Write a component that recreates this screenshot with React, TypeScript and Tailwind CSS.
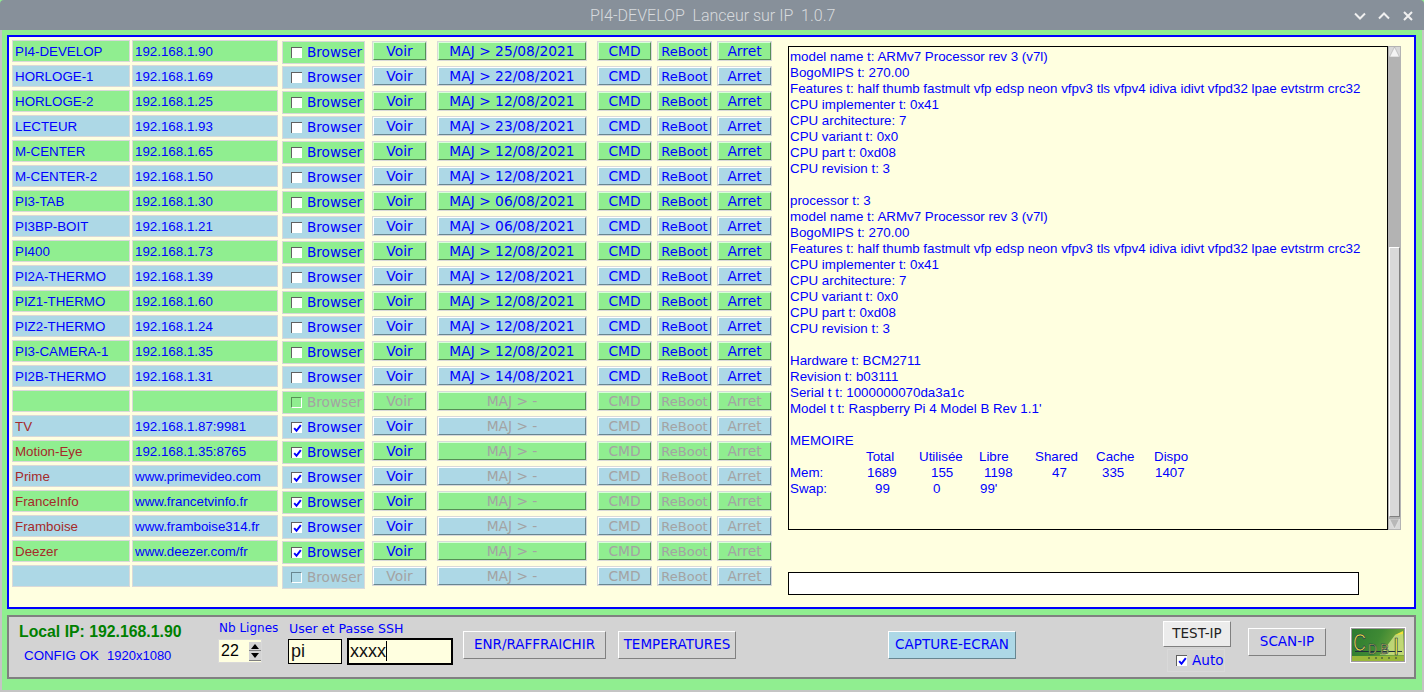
import React from "react";

type Row = { n: string; ip: string; maj: string; chk?: boolean; bOff?: boolean; vOff?: boolean; rest?: boolean; red?: boolean };

const rows: Row[] = [
  { n: "PI4-DEVELOP", ip: "192.168.1.90", maj: "25/08/2021" },
  { n: "HORLOGE-1", ip: "192.168.1.69", maj: "22/08/2021" },
  { n: "HORLOGE-2", ip: "192.168.1.25", maj: "12/08/2021" },
  { n: "LECTEUR", ip: "192.168.1.93", maj: "23/08/2021" },
  { n: "M-CENTER", ip: "192.168.1.65", maj: "12/08/2021" },
  { n: "M-CENTER-2", ip: "192.168.1.50", maj: "12/08/2021" },
  { n: "PI3-TAB", ip: "192.168.1.30", maj: "06/08/2021" },
  { n: "PI3BP-BOIT", ip: "192.168.1.21", maj: "06/08/2021" },
  { n: "PI400", ip: "192.168.1.73", maj: "12/08/2021" },
  { n: "PI2A-THERMO", ip: "192.168.1.39", maj: "12/08/2021" },
  { n: "PIZ1-THERMO", ip: "192.168.1.60", maj: "12/08/2021" },
  { n: "PIZ2-THERMO", ip: "192.168.1.24", maj: "12/08/2021" },
  { n: "PI3-CAMERA-1", ip: "192.168.1.35", maj: "12/08/2021" },
  { n: "PI2B-THERMO", ip: "192.168.1.31", maj: "14/08/2021" },
  { n: "", ip: "", maj: "-", bOff: true, vOff: true, rest: true },
  { n: "TV", ip: "192.168.1.87:9981", maj: "-", chk: true, rest: true, red: true },
  { n: "Motion-Eye", ip: "192.168.1.35:8765", maj: "-", chk: true, rest: true, red: true },
  { n: "Prime", ip: "www.primevideo.com", maj: "-", chk: true, rest: true, red: true },
  { n: "FranceInfo", ip: "www.francetvinfo.fr", maj: "-", chk: true, rest: true, red: true },
  { n: "Framboise", ip: "www.framboise314.fr", maj: "-", chk: true, rest: true, red: true },
  { n: "Deezer", ip: "www.deezer.com/fr", maj: "-", chk: true, rest: true, red: true },
  { n: "", ip: "", maj: "-", bOff: true, vOff: true, rest: true },
];

const infoTop = [
  "model name t: ARMv7 Processor rev 3 (v7l)",
  "BogoMIPS t: 270.00",
  "Features t: half thumb fastmult vfp edsp neon vfpv3 tls vfpv4 idiva idivt vfpd32 lpae evtstrm crc32",
  "CPU implementer t: 0x41",
  "CPU architecture: 7",
  "CPU variant t: 0x0",
  "CPU part t: 0xd08",
  "CPU revision t: 3",
  "\u00a0",
  "processor t: 3",
  "model name t: ARMv7 Processor rev 3 (v7l)",
  "BogoMIPS t: 270.00",
  "Features t: half thumb fastmult vfp edsp neon vfpv3 tls vfpv4 idiva idivt vfpd32 lpae evtstrm crc32",
  "CPU implementer t: 0x41",
  "CPU architecture: 7",
  "CPU variant t: 0x0",
  "CPU part t: 0xd08",
  "CPU revision t: 3",
  "\u00a0",
  "Hardware t: BCM2711",
  "Revision t: b03111",
  "Serial t t: 1000000070da3a1c",
  "Model t t: Raspberry Pi 4 Model B Rev 1.1'",
  "\u00a0",
  "MEMOIRE",
];

function Tick() {
  return (
    <svg viewBox="0 0 9 9" className="absolute left-[1px] top-[1px] w-[9px] h-[9px]">
      <path d="M1.2 4.2 L3.5 6.8 L7.8 1.2" fill="none" stroke="#0000ff" strokeWidth="2" />
    </svg>
  );
}

function Btn({ w, g, off, small, children }: { w: string; g: boolean; off?: boolean; small?: boolean; children: React.ReactNode }) {
  return (
    <div className={`${w} h-[20px] border border-[#d9d9d9] shrink-0`}>
      <div
        className={`h-full border pt-[1px] flex items-center justify-center ${small ? "text-[13px]" : "text-[13.8px]"} leading-none ${
          g ? "bg-[#90ee90] border-t-[#d8ffd8] border-l-[#d8ffd8] border-b-[#569056] border-r-[#569056]" : "bg-[#add8e6] border-t-[#ffffff] border-l-[#ffffff] border-b-[#688690] border-r-[#688690]"
        } ${off ? "text-[#a3a3a3]" : "text-[#0000ff]"}`}
      >
        <span className="whitespace-pre">{children}</span>
      </div>
    </div>
  );
}

function TableRow({ r, i }: { r: Row; i: number }) {
  const g = i % 2 === 0;
  const bg = g ? "bg-[#90ee90]" : "bg-[#add8e6]";
  return (
    <div className="flex h-[25px] items-start">
      <div className={`w-[118px] h-[22px] shrink-0 border border-[#d9d9d9] ${bg} pl-[2px] pt-[1px] flex items-center text-[13.33px] font-[Liberation_Sans,sans-serif] ${r.red ? "text-[#a52a2a]" : "text-[#0000ff]"}`}>
        {r.n}
      </div>
      <div className={`ml-[2px] w-[146px] h-[22px] shrink-0 border border-[#d9d9d9] ${bg} pl-[2px] pt-[1px] flex items-center text-[13.33px] font-[Liberation_Sans,sans-serif] text-[#0000ff]`}>
        {r.ip}
      </div>
      <div className={`ml-[4px] mt-[1px] w-[83px] h-[23px] shrink-0 border border-[#d9d9d9] ${bg} relative flex items-center`}>
        <div
          className={`absolute left-[8px] top-[5px] w-[11px] h-[11px] border-t border-l ${
            r.bOff ? (g ? "bg-[#90ee90] border-[#569056] border-r border-b border-r-[#ffffff] border-b-[#ffffff]" : "bg-[#add8e6] border-[#688690] border-r border-b border-r-[#ffffff] border-b-[#ffffff]") : "bg-white border-[#606060]"
          }`}
        >
          {r.chk && <Tick />}
        </div>
        <span className={`absolute left-[24px] top-[2px] text-[13.6px] leading-[17px] ${r.bOff ? "text-[#a3a3a3]" : "text-[#0000ff]"}`}>Browser</span>
      </div>
      <div className="ml-[7px] mt-[1px] flex">
        <Btn w="w-[55px]" g={g} off={r.vOff}>Voir</Btn>
        <div className="ml-[10px]"><Btn w="w-[150px]" g={g} off={r.rest}>{`MAJ > ${r.maj}`}</Btn></div>
        <div className="ml-[10px]"><Btn w="w-[55px]" g={g} off={r.rest}>CMD</Btn></div>
        <div className="ml-[5px]"><Btn w="w-[55px]" g={g} off={r.rest} small>ReBoot</Btn></div>
        <div className="ml-[5px]"><Btn w="w-[55px]" g={g} off={r.rest}>Arret</Btn></div>
      </div>
    </div>
  );
}

function PanelBtn({ cls, children }: { cls: string; children: React.ReactNode }) {
  return (
    <div className={`absolute border border-t-white border-l-white flex items-center justify-center pb-[1px] text-[13.5px] leading-none whitespace-pre ${cls}`}>
      {children}
    </div>
  );
}

export default function App() {
  return (
    <div className="relative w-[1424px] h-[692px] overflow-hidden bg-[#90ee90] font-[DejaVu_Sans,sans-serif]">
      {/* title bar */}
      <div className="absolute left-0 top-0 w-[1424px] h-[30px] bg-[#87909a] rounded-t-[4px] flex items-center justify-center">
        <span className="absolute left-[590px] top-[6px] whitespace-pre text-[16px] leading-[20px] font-light text-[#d8dbde] font-[Roboto,sans-serif]">
          PI4-DEVELOP  Lanceur sur IP  1.0.7
        </span>
        <svg viewBox="0 0 72 12" className="absolute left-[1351px] top-[10px] w-[72px] h-[12px]">
          <path d="M4 3.5 L9 8.5 L14 3.5" fill="none" stroke="#f0f0f0" strokeWidth="2" />
          <path d="M28 8.5 L33 3.5 L38 8.5" fill="none" stroke="#f0f0f0" strokeWidth="2" />
          <path d="M53 2 L61 10 M61 2 L53 10" fill="none" stroke="#f0f0f0" strokeWidth="2" />
        </svg>
      </div>
      <div className="absolute left-0 top-[30px] bottom-0 w-[2px] bg-[#c4c4c4]" />
      <div className="absolute left-0 bottom-0 w-full h-[2px] bg-[#c4c4c4]" />
      <div className="absolute right-0 top-[30px] bottom-0 w-[2px] bg-[#c4c4c4]" />

      {/* main frame */}
      <div className="absolute left-[7px] top-[35px] w-[1409px] h-[574px] border-2 border-[#0000ff] bg-[#ffffe0]">
        <div className="absolute left-[3px] top-[3px]">
          {rows.map((r, i) => (
            <TableRow key={i} r={r} i={i} />
          ))}
        </div>

        {/* info text */}
        <div className="absolute left-[779px] top-[9px] w-[600px] h-[484px] border border-black bg-[#ffffe0] pl-[1px] pt-[2px] text-[13.33px] leading-[16px] font-[Liberation_Sans,sans-serif] text-[#0000ff] whitespace-pre">
          {infoTop.map((t, i) => (
            <div key={i}>{t}</div>
          ))}
          <div className="relative h-[48px]">
            <span className="absolute left-[76px] top-0">Total</span>
            <span className="absolute left-[129px] top-0">Utilisée</span>
            <span className="absolute left-[189px] top-0">Libre</span>
            <span className="absolute left-[245px] top-0">Shared</span>
            <span className="absolute left-[306px] top-0">Cache</span>
            <span className="absolute left-[364px] top-0">Dispo</span>
            <span className="absolute left-0 top-[16px]">Mem:</span>
            <span className="absolute left-[77px] top-[16px]">1689</span>
            <span className="absolute left-[141px] top-[16px]">155</span>
            <span className="absolute left-[194px] top-[16px]">1198</span>
            <span className="absolute left-[262px] top-[16px]">47</span>
            <span className="absolute left-[312px] top-[16px]">335</span>
            <span className="absolute left-[365px] top-[16px]">1407</span>
            <span className="absolute left-0 top-[32px]">Swap:</span>
            <span className="absolute left-[85px] top-[32px]">99</span>
            <span className="absolute left-[143px] top-[32px]">0</span>
            <span className="absolute left-[190px] top-[32px]">99'</span>
          </div>
        </div>

        {/* scrollbar */}
        <div className="absolute left-[1379px] top-[9px] w-[13px] h-[484px] bg-[#b3b3b3]">
          <div className="absolute left-[1px] top-[1px] w-[11px] h-[10px] bg-[#d9d9d9]">
            <svg viewBox="0 0 11 10" className="w-[11px] h-[10px]">
              <path d="M5.5 0 L0.5 10 L10.5 10 Z" fill="#f4f4f4" stroke="#a0a0a0" strokeWidth="0.5" />
            </svg>
          </div>
          <div className="absolute left-[1px] top-[201px] w-[11px] h-[270px] bg-[#d9d9d9] border-t border-l border-t-white border-l-white border-b border-r border-b-[#808080] border-r-[#808080]" />
          <div className="absolute left-[1px] top-[473px] w-[11px] h-[10px] bg-[#d9d9d9]">
            <svg viewBox="0 0 11 10" className="w-[11px] h-[10px]">
              <path d="M5.5 10 L0.5 0 L10.5 0 Z" fill="#b8b8b8" stroke="#f0f0f0" strokeWidth="0.5" />
            </svg>
          </div>
        </div>

        {/* entry */}
        <div className="absolute left-[779px] top-[535px] w-[571px] h-[23px] border border-black bg-white" />
      </div>

      {/* bottom panel */}
      <div className="absolute left-[7px] top-[615px] w-[1409px] h-[64px] border-2 border-[#808080] bg-[#d3d3d3]" />

      <div className="absolute left-[19px] top-[622px] text-[15.8px] leading-[19px] font-bold text-[#008000] font-[Liberation_Sans,sans-serif]">Local IP: 192.168.1.90</div>
      <div className="absolute left-[24px] top-[648px] text-[13.33px] leading-[15px] text-[#0000ff] font-[Liberation_Sans,sans-serif] whitespace-pre">CONFIG OK</div>
      <div className="absolute left-[107px] top-[648px] text-[13px] leading-[15px] text-[#0000ff] font-[Liberation_Sans,sans-serif] whitespace-pre">1920x1080</div>

      <div className="absolute left-[219px] top-[621px] text-[12px] leading-[15px] text-[#0000ff]">Nb Lignes</div>
      <div className="absolute left-[289px] top-[621px] text-[12.6px] leading-[15px] text-[#0000ff]">User et Passe SSH</div>

      {/* spinbox */}
      <div className="absolute left-[218px] top-[639px] w-[44px] h-[24px] bg-[#ffffe0] border border-[#d9d9d9]">
        <span className="absolute left-[2px] top-[2px] text-[16px] leading-[18px] text-black font-[Liberation_Sans,sans-serif]">22</span>
        <div className="absolute left-[30px] top-[2px] w-[12px] h-[9px] bg-[#d3d3d3] border-b border-[#808080] flex items-center justify-center">
          <svg viewBox="0 0 8 5" className="w-[8px] h-[5px]"><path d="M4 0 L8 5 L0 5 Z" fill="#000" /></svg>
        </div>
        <div className="absolute left-[30px] top-[11px] w-[12px] h-[10px] bg-[#d3d3d3] border-b border-[#808080] flex items-center justify-center">
          <svg viewBox="0 0 8 5" className="w-[8px] h-[5px]"><path d="M4 5 L8 0 L0 0 Z" fill="#000" /></svg>
        </div>
      </div>

      {/* ssh */}
      <div className="absolute left-[288px] top-[639px] w-[54px] h-[25px] border border-black bg-[#ffffe0] pl-[2px] text-[18px] leading-[23px] text-[#111] font-[Liberation_Sans,sans-serif]">pi</div>
      <div className="absolute left-[347px] top-[638px] w-[106px] h-[27px] border-2 border-black bg-[#ffffe0] pl-[1px] text-[18px] leading-[23px] text-[#111] font-[Liberation_Sans,sans-serif]">
        xxxx
        <div className="absolute left-[37px] top-[1px] w-[1px] h-[20px] bg-black" />
      </div>

      <PanelBtn cls="left-[463px] top-[631px] w-[143px] h-[28px] bg-[#d3d3d3] border-b-[#808080] border-r-[#808080] text-[#0000ff]">ENR/RAFFRAICHIR</PanelBtn>
      <PanelBtn cls="left-[618px] top-[631px] w-[118px] h-[28px] bg-[#d3d3d3] border-b-[#808080] border-r-[#808080] text-[#0000ff]">TEMPERATURES</PanelBtn>
      <PanelBtn cls="left-[888px] top-[631px] w-[128px] h-[28px] bg-[#add8e6] border-b-[#688690] border-r-[#688690] text-[#0000ff]">CAPTURE-ECRAN</PanelBtn>
      <PanelBtn cls="left-[1163px] top-[621px] w-[68px] h-[26px] bg-[#ececec] border-b-[#808080] border-r-[#808080] text-[#222222]">TEST-IP</PanelBtn>
      <PanelBtn cls="left-[1248px] top-[628px] w-[78px] h-[28px] bg-[#d3d3d3] border-b-[#808080] border-r-[#808080] text-[#0000ff]">SCAN-IP</PanelBtn>

      {/* auto */}
      <div className="absolute left-[1167px] top-[649px] w-[58px] h-[23px] border border-[#d9d9d9]">
        <div className="absolute left-[8px] top-[5px] w-[11px] h-[11px] bg-white border-t border-l border-[#606060]"><Tick /></div>
        <span className="absolute left-[24px] top-[2px] text-[13.6px] leading-[16px] text-[#0000ff]">Auto</span>
      </div>

      {/* logo */}
      <div className="absolute left-[1350px] top-[627px] w-[56px] h-[36px] border border-white bg-[#a09aa0] p-[1px]">
        <svg viewBox="0 0 52 32" className="w-[52px] h-[32px] block">
          <defs>
            <linearGradient id="lg" x1="0" y1="0" x2="1" y2="0.3">
              <stop offset="0" stopColor="#2c7a30" />
              <stop offset="0.55" stopColor="#3f8a34" />
              <stop offset="1" stopColor="#7aa83e" />
            </linearGradient>
          </defs>
          <rect width="52" height="32" fill="url(#lg)" />
          <path d="M51 3 L43 6 L28 26 L52 26 Z" fill="#dbe88a" opacity="0.75" />
          <path d="M43 6 L51 2 L51 5 Z" fill="#f2e23a" />
          <rect x="0" y="27" width="52" height="5" fill="#9ab83a" />
          <rect x="3" y="22" width="47" height="1" fill="#20303a" />
          <text x="1" y="22" fontSize="23" fontFamily="Liberation Sans, sans-serif" fill="#efe23a" stroke="#14305a" strokeWidth="0.7" textLength="13" lengthAdjust="spacingAndGlyphs">C</text>
          <text x="16" y="25" fontSize="15" fontFamily="Liberation Sans, sans-serif" fill="#efe23a" stroke="#14305a" strokeWidth="0.6" textLength="9" lengthAdjust="spacingAndGlyphs">D</text>
          <text x="28" y="25" fontSize="15" fontFamily="Liberation Sans, sans-serif" fill="#efe23a" stroke="#14305a" strokeWidth="0.6" textLength="9" lengthAdjust="spacingAndGlyphs">B</text>
          <text x="41" y="26" fontSize="23" fontFamily="Liberation Sans, sans-serif" fill="#efe23a" stroke="#14305a" strokeWidth="0.6">I</text>
          <circle cx="17" cy="29" r="0.8" fill="#20303a" />
          <circle cx="24" cy="29" r="0.8" fill="#20303a" />
          <circle cx="30" cy="29" r="0.8" fill="#20303a" />
          <circle cx="37" cy="29" r="0.8" fill="#20303a" />
          <circle cx="44" cy="29" r="0.8" fill="#20303a" />
        </svg>
      </div>
    </div>
  );
}
